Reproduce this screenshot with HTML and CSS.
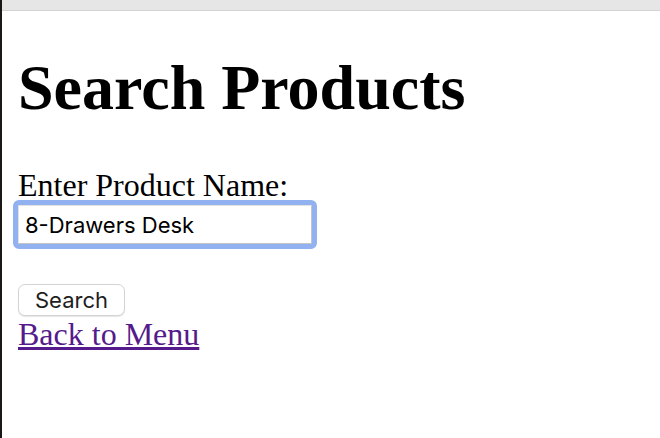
FILE: index.html
```html
<!DOCTYPE html>
<html lang="en">
<head>
  <meta charset="UTF-8">
  <title>Search Products</title>
  <link rel="stylesheet" href="styles.css">
</head>
<body>

  <div class="topbar"></div>

  <div class="page">
    <h1>Search Products</h1>

    <form class="search-form" action="#">
      <label for="productName">Enter Product Name:</label>
      <input type="text" id="productName" name="productName" value="8-Drawers Desk">
      <button type="submit">Search</button>
    </form>

    <a class="back-link" href="#">Back to Menu</a>
  </div>

</body>
</html>
```

FILE: styles.css
```css
/* — General — */
* { box-sizing: border-box; }
body {
  margin: 0;
  min-height: 100vh;
  border-left: 2px solid #1b1714;
  background: #fff;
  color: #000;
  font-family: 'Liberation Serif', 'Times New Roman', serif;
  font-size: 32px;
}

/* — Window strip — */
.topbar {
  height: 11px;
  background: #e6e6e6;
  border-bottom: 1px solid #d3d3d3;
}

/* — Page — */
.page {
  padding: 0 16px;
}
h1 {
  margin: 40px 0 42px;
  font-size: 64px;
  font-weight: bold;
}

/* — Form — */
.search-form label {
  display: block;
}
.search-form input {
  display: block;
  width: 294px;
  height: 39px;
  margin-top: 1px;
  padding: 0 6px;
  font-family: Inter, 'Liberation Sans', sans-serif;
  font-size: 22px;
  color: #000;
  background: #fff;
  border: 1px solid #c4c4c4;
  border-top-color: #e2e2e2;
  border-left-color: #e2e2e2;
  border-radius: 1px;
  outline: 5px solid #92b1f1;
}
.search-form button {
  display: block;
  height: 32px;
  margin-top: 40px;
  padding: 0 16px;
  font-family: Inter, 'Liberation Sans', sans-serif;
  font-size: 22px;
  color: #1e1e1e;
  background: #fff;
  border: 1px solid #d4d4d4;
  border-radius: 7px;
  box-shadow: 0 1px 1px rgba(0, 0, 0, 0.1);
  cursor: pointer;
}

/* — Link — */
.back-link {
  display: inline-block;
  color: #551a8b;
}
```
